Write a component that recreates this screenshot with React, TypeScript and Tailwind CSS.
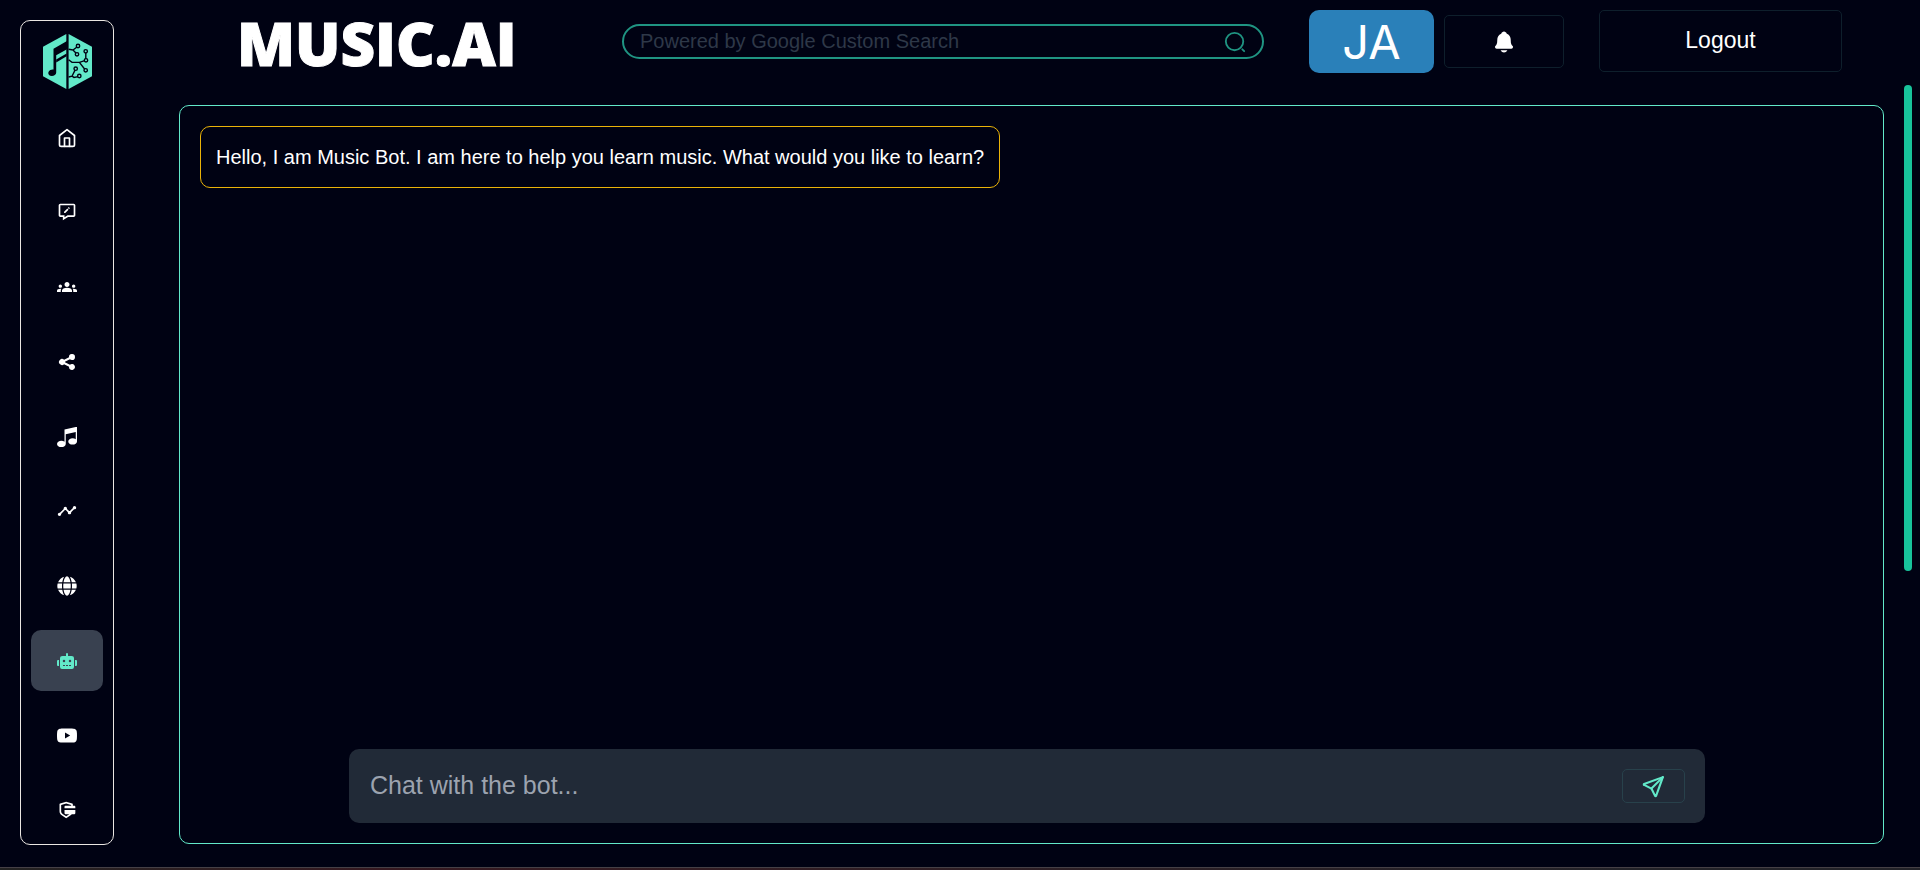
import type { ComponentType } from "react";
import { BiMessageEdit } from "react-icons/bi";
import { BsYoutube } from "react-icons/bs";
import { FaGlobe, FaRobot } from "react-icons/fa";
import { FiHome } from "react-icons/fi";
import { HiShare } from "react-icons/hi";
import { ImMusic } from "react-icons/im";
import { IoNotifications } from "react-icons/io5";
import { MdGroups, MdTimeline } from "react-icons/md";
import { RiSecurePaymentFill } from "react-icons/ri";
import { TbSend } from "react-icons/tb";

type NavItem = {
  label: string;
  icon: ComponentType<{ size?: number }>;
  active?: boolean;
};

const navItems: NavItem[] = [
  { label: "Home", icon: FiHome },
  { label: "Messages", icon: BiMessageEdit },
  { label: "Groups", icon: MdGroups },
  { label: "Share", icon: HiShare },
  { label: "Music", icon: ImMusic },
  { label: "Timeline", icon: MdTimeline },
  { label: "Explore", icon: FaGlobe },
  { label: "Music Bot", icon: FaRobot, active: true },
  { label: "Videos", icon: BsYoutube },
  { label: "Payments", icon: RiSecurePaymentFill },
];

const circuitNodes = [
  [35, 12],
  [34, 20.3],
  [42.7, 17.3],
  [43, 26.3],
  [42.7, 36.3],
  [32.7, 34.7],
  [36.3, 42],
];

function Logo() {
  return (
    <svg viewBox="0 0 49 55" className="h-[55px] w-[49px]" aria-hidden="true">
      <path d="M0 12.8 23.3 0v55L0 42.2Z" fill="#62e9c9" />
      <path d="M25.6 0 49 12.8v29.4L25.6 55Z" fill="#62e9c9" />
      <path
        d="M10.5 14.8 24 7v8.2L13.2 21.3V38.5a4 3.3 -15 1 1-2.7-3Z"
        fill="#000213"
      />
      <path d="M13.2 25.6 23.6 19.4v2.8L13.2 28.4Z" fill="#000213" />
      <g fill="none" stroke="#000213" strokeWidth="1.4">
        <path d="M25.6 15.2 30 16l4-3M30 16l3.4 3.4" />
        <path d="M25.6 25.8 29 28.4h7.4l5.4-1.7M36.4 28.4l5.4 6.8M42.8 25v-6.4" />
        <path d="M25.6 43 29 42.2l3.2-6.3M29 42.2l2 1.2 4.2-.8" />
      </g>
      {circuitNodes.map(([cx, cy]) => (
        <circle
          key={`${cx}-${cy}`}
          cx={cx}
          cy={cy}
          r="1.7"
          fill="#62e9c9"
          stroke="#000213"
          strokeWidth="1.4"
        />
      ))}
    </svg>
  );
}

function Sidebar() {
  return (
    <aside className="flex w-[94px] shrink-0 flex-col items-center rounded-[10px] border border-[#eae6e2] pt-[13px] pb-[3px]">
      <Logo />
      <nav className="mt-[18px] flex flex-1 flex-col justify-between gap-2">
        {navItems.map(({ label, icon: Icon, active }) => (
          <a
            key={label}
            href="#"
            aria-label={label}
            className={
              active
                ? "flex h-[61px] w-[72px] items-center justify-center rounded-[10px] bg-[#394150] text-[#62e9c9]"
                : "flex h-[61px] w-[72px] items-center justify-center rounded-[10px] text-white"
            }
          >
            <Icon size={20} />
          </a>
        ))}
      </nav>
    </aside>
  );
}

function Header() {
  return (
    <header className="flex h-[85px] items-start pr-[42px] pl-[58px]">
      <h1 className="-mt-[13px] w-[385px] shrink-0 font-['Open_Sans',sans-serif] text-[60px] leading-[72px] font-extrabold [-webkit-text-stroke:1px_white]">
        MUSIC.AI
      </h1>
      <form className="mt-1 flex h-[35px] min-w-0 flex-1 items-center rounded-full border-2 border-[#1f9482] pr-4 pl-4">
        <input
          type="search"
          aria-label="Search"
          placeholder="Powered by Google Custom Search"
          className="min-w-0 flex-1 bg-transparent pb-0.5 text-xl leading-6 outline-none placeholder:text-[#2e3848]"
        />
        <button type="button" aria-label="Search" className="text-[#1f9482]">
          <svg
            viewBox="0 0 24 24"
            className="size-[22px]"
            fill="none"
            stroke="currentColor"
            strokeWidth="2"
            strokeLinecap="round"
          >
            <circle cx="11.5" cy="11.5" r="9.5" />
            <path d="m22 22-2-2" />
          </svg>
        </button>
      </form>
      <div className="-mt-2.5 ml-[45px] flex h-[63px] w-[125px] shrink-0 items-center justify-center rounded-[10px] bg-[#2a80b9] font-['Inter',sans-serif] text-[47px] leading-none">
        JA
      </div>
      <button
        type="button"
        aria-label="Notifications"
        className="-mt-[5px] ml-2.5 flex h-[53px] w-[120px] shrink-0 items-center justify-center rounded-[5px] border border-[#0e1f2c]"
      >
        <IoNotifications size={24} />
      </button>
      <button
        type="button"
        className="-mt-2.5 ml-[35px] h-[62px] w-[243px] shrink-0 rounded-[5px] border border-[#0e1f2c] pb-0.5 text-[23px]"
      >
        Logout
      </button>
    </header>
  );
}

function Chat() {
  return (
    <main className="mb-px flex flex-1 flex-col items-start justify-between rounded-[10px] border border-[#62e9c9] p-5">
      <p className="rounded-[10px] border border-[#eab308] px-[15px] py-4 text-xl leading-7">
        Hello, I am Music Bot. I am here to help you learn music. What would you
        like to learn?
      </p>
      <div className="w-full pr-[158px] pl-[149px]">
        <form className="flex h-[74px] items-center rounded-[10px] bg-[#212a37] pr-5 pl-[21px]">
          <input
            type="text"
            aria-label="Message"
            placeholder="Chat with the bot..."
            className="min-w-0 flex-1 bg-transparent pb-0.5 text-[25px] leading-8 outline-none placeholder:text-[#9ca3af]"
          />
          <button
            type="button"
            aria-label="Send"
            className="flex h-[34px] w-[63px] items-center justify-center rounded-[5px] border border-[#28414b] text-[#62e9c9]"
          >
            <TbSend size={25} />
          </button>
        </form>
      </div>
    </main>
  );
}

export default function App() {
  return (
    <div className="flex min-h-screen flex-col bg-[#000213] font-['Liberation_Sans',Arial,sans-serif] text-white">
      <div className="flex flex-1 pt-5 pr-2 pb-[22px] pl-5">
        <Sidebar />
        <div className="ml-[65px] flex min-w-0 flex-1 flex-col">
          <Header />
          <Chat />
        </div>
        <div className="mt-[65px] ml-5 h-[486px] w-2 shrink-0 rounded-full bg-[#18c39b]" />
      </div>
      <div className="h-[3px] border-t border-[#454046] bg-linear-to-r from-[#222222] via-[#351820] via-20% to-[#222228] to-85%" />
    </div>
  );
}
